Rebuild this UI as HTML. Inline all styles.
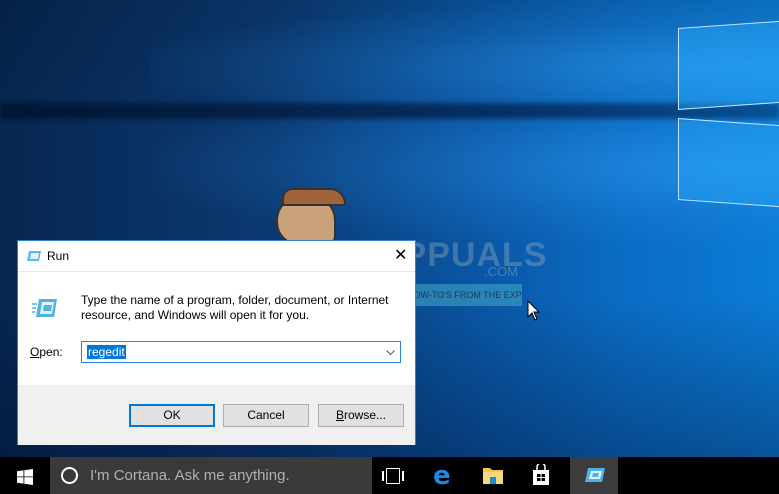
<!DOCTYPE html>
<html><head><meta charset="utf-8"><style>
*{margin:0;padding:0;box-sizing:border-box}
body{width:779px;height:494px;overflow:hidden;position:relative;font-family:"Liberation Sans",sans-serif;
background:linear-gradient(90deg,#072650 0%,#0b3a72 35%,#0a55a2 60%,#0a6cc4 80%,#0b7cd6 100%)}
.abs{position:absolute}
</style></head><body>
<div class="abs" style="left:0;top:0;width:779px;height:457px;background:linear-gradient(180deg,rgba(0,0,0,0.12) 0%,rgba(0,0,0,0) 30%,rgba(0,0,0,0) 65%,rgba(0,10,40,0.35) 100%)"></div>
<div class="abs" style="left:150px;top:0px;width:700px;height:110px;background:radial-gradient(ellipse at 85% 60%,rgba(50,160,245,0.55) 0%,rgba(40,140,230,0.2) 45%,rgba(40,140,230,0) 75%)"></div>
<div class="abs" style="left:150px;top:115px;width:700px;height:130px;background:radial-gradient(ellipse at 85% 40%,rgba(50,160,245,0.5) 0%,rgba(40,140,230,0.2) 45%,rgba(40,140,230,0) 75%)"></div>
<div class="abs" style="left:0;top:103px;width:779px;height:16px;background:linear-gradient(90deg,rgba(2,16,40,0.7),rgba(3,30,70,0.7) 60%,rgba(5,40,90,0.5));filter:blur(2px)"></div>
<!-- windows logo -->
<div class="abs" style="left:678px;top:28px;width:110px;height:82px;border:1px solid #bfe6ff;background:rgba(40,170,250,0.45);transform:skewY(-4deg);transform-origin:left bottom"></div>
<div class="abs" style="left:678px;top:118px;width:110px;height:82px;border:1px solid #bfe6ff;background:rgba(40,170,250,0.4);transform:skewY(4deg);transform-origin:left top"></div>
<!-- mascot approx -->
<div class="abs" style="left:276px;top:196px;width:60px;height:50px;background:#c9a27a;border:2px solid #333;border-radius:24px 24px 10px 24px"></div>
<div class="abs" style="left:282px;top:188px;width:64px;height:18px;background:#a0643a;border:2px solid #333;border-radius:20px 30px 4px 4px"></div>
<div class="abs" style="left:258px;top:262px;width:40px;height:40px;background:rgba(120,200,230,0.6);border-radius:10px"></div>
<div class="abs" style="left:320px;top:288px;width:48px;height:20px;background:rgba(210,160,110,0.7)"></div>
<!-- watermark -->
<div class="abs" style="left:378px;top:236px;font-size:34px;color:rgba(150,170,190,0.4);font-weight:bold;letter-spacing:1px;white-space:nowrap">APPUALS</div>
<div class="abs" style="left:484px;top:264px;font-size:13px;color:rgba(150,170,190,0.45)">.COM</div>
<div class="abs" style="left:376px;top:284px;width:146px;height:22px;background:rgba(70,170,200,0.55);font-size:9px;color:#1a3a5a;line-height:22px;padding-left:4px;white-space:nowrap;overflow:hidden">TECH HOW-TO'S FROM THE EXPERTS!</div>
<svg class="abs" style="left:527px;top:300px" width="14" height="22" viewBox="0 0 14 22"><path d="M1 1 L1 17 L5 13 L8 20 L10 19 L7 12 L12 12 Z" fill="#fff" stroke="#000" stroke-width="1"/></svg>
<!-- dialog -->
<div class="abs" style="left:17px;top:240px;width:399px;height:205px;background:#fff;border:1px solid #2f7fd1">
  <div class="abs" style="left:0;top:0;width:397px;height:31px;border-bottom:1px solid #e8e8e8"></div>
  <svg class="abs" style="left:8px;top:9px" width="16" height="12" viewBox="0 0 16 12"><path d="M3 1h12l-2 10H1z" fill="#5bb8e8"/><path d="M5 3h8l-1 6H4z" fill="#dff3fc"/></svg>
  <div class="abs" style="left:29px;top:8px;font-size:12px;color:#000">Run</div>
  <div class="abs" style="left:376px;top:4px;font-size:16px;color:#000">✕</div>
  <svg class="abs" style="left:14px;top:56px" width="26" height="22" viewBox="0 0 26 22"><path d="M7 2h18l-3 18H4z" fill="#4db3e6"/><path d="M10 5h12l-2 12H8z" fill="#e4f5fd"/><path d="M12 8h8l-1 6h-8z" fill="#4db3e6"/><path d="M0 7h5M0 11h4M0 15h3" stroke="#4db3e6" stroke-width="1.5"/></svg>
  <div class="abs" style="left:63px;top:52px;font-size:12px;line-height:15px;color:#000">Type the name of a program, folder, document, or Internet<br>resource, and Windows will open it for you.</div>
  <div class="abs" style="left:12px;top:104px;font-size:12px;color:#000"><u>O</u>pen:</div>
  <div class="abs" style="left:63px;top:100px;width:320px;height:22px;border:1px solid #2b7fd4">
    <span class="abs" style="left:5px;top:3px;font-size:12px;line-height:14px;background:#0078d7;color:#fff;padding:0 1px">regedit</span>
    <svg class="abs" style="left:304px;top:8px" width="9" height="6" viewBox="0 0 9 6"><path d="M0.5 0.5L4.5 4.5L8.5 0.5" fill="none" stroke="#555"/></svg>
  </div>
  <div class="abs" style="left:0;top:144px;width:397px;height:60px;background:#f0f0f0"></div>
  <div class="abs" style="left:111px;top:163px;width:86px;height:23px;background:#e1e1e1;border:2px solid #0078d7;font-size:12px;text-align:center;line-height:19px">OK</div>
  <div class="abs" style="left:205px;top:163px;width:86px;height:23px;background:#e1e1e1;border:1px solid #adadad;font-size:12px;text-align:center;line-height:21px">Cancel</div>
  <div class="abs" style="left:300px;top:163px;width:86px;height:23px;background:#e1e1e1;border:1px solid #adadad;font-size:12px;text-align:center;line-height:21px"><u>B</u>rowse...</div>
</div>
<!-- taskbar -->
<div class="abs" style="left:0;top:457px;width:779px;height:37px;background:#000"></div>
<svg class="abs" style="left:17px;top:469px" width="16" height="16" viewBox="0 0 16 16"><path d="M0 2.2l6.5-.9v6.2H0zM7.3 1.2L16 0v7.5H7.3zM0 8.3h6.5v6.3L0 13.7zM7.3 8.3H16V16l-8.7-1.2z" fill="#fff"/></svg>
<div class="abs" style="left:50px;top:457px;width:322px;height:37px;background:#3a3a3a"></div>
<div class="abs" style="left:61px;top:467px;width:17px;height:17px;border:2px solid #fff;border-radius:50%"></div>
<div class="abs" style="left:90px;top:467px;font-size:15px;color:#b0b0b0">I'm Cortana. Ask me anything.</div>
<div class="abs" style="left:386px;top:468px;width:14px;height:16px;border:1.5px solid #fff;border-radius:1px"></div>
<div class="abs" style="left:382px;top:471px;width:2px;height:10px;background:#fff"></div>
<div class="abs" style="left:402px;top:471px;width:2px;height:10px;background:#fff"></div>
<div class="abs" style="left:433px;top:461px;font-size:26px;font-weight:bold;color:#1e88e5;font-family:'DejaVu Sans',sans-serif">e</div>
<svg class="abs" style="left:483px;top:466px" width="20" height="18" viewBox="0 0 20 18"><path d="M0 2h7l2 2h11v14H0z" fill="#f3c74e"/><path d="M0 6h20v12H0z" fill="#f8d977"/><path d="M7 11h6v7H7z" fill="#1e88e5"/></svg>
<svg class="abs" style="left:532px;top:464px" width="18" height="21" viewBox="0 0 18 21"><path d="M5 6V3a4 4 0 0 1 8 0v3" fill="none" stroke="#fff" stroke-width="1.5"/><path d="M1 6h16v15H1z" fill="#fff"/><path d="M5 10h3.5v3H5zM9.5 10H13v3H9.5zM5 14h3.5v3H5zM9.5 14H13v3H9.5z" fill="#000"/></svg>
<div class="abs" style="left:570px;top:457px;width:48px;height:37px;background:#3c3c3c"></div>
<svg class="abs" style="left:583px;top:467px" width="22" height="16" viewBox="0 0 22 16"><path d="M5 1h17l-3 14H2z" fill="#4db3e6"/><path d="M8 4h11l-2 8H6z" fill="#dff3fc"/><path d="M10 6h6l-1 4H9z" fill="#4db3e6"/></svg>
</body></html>
